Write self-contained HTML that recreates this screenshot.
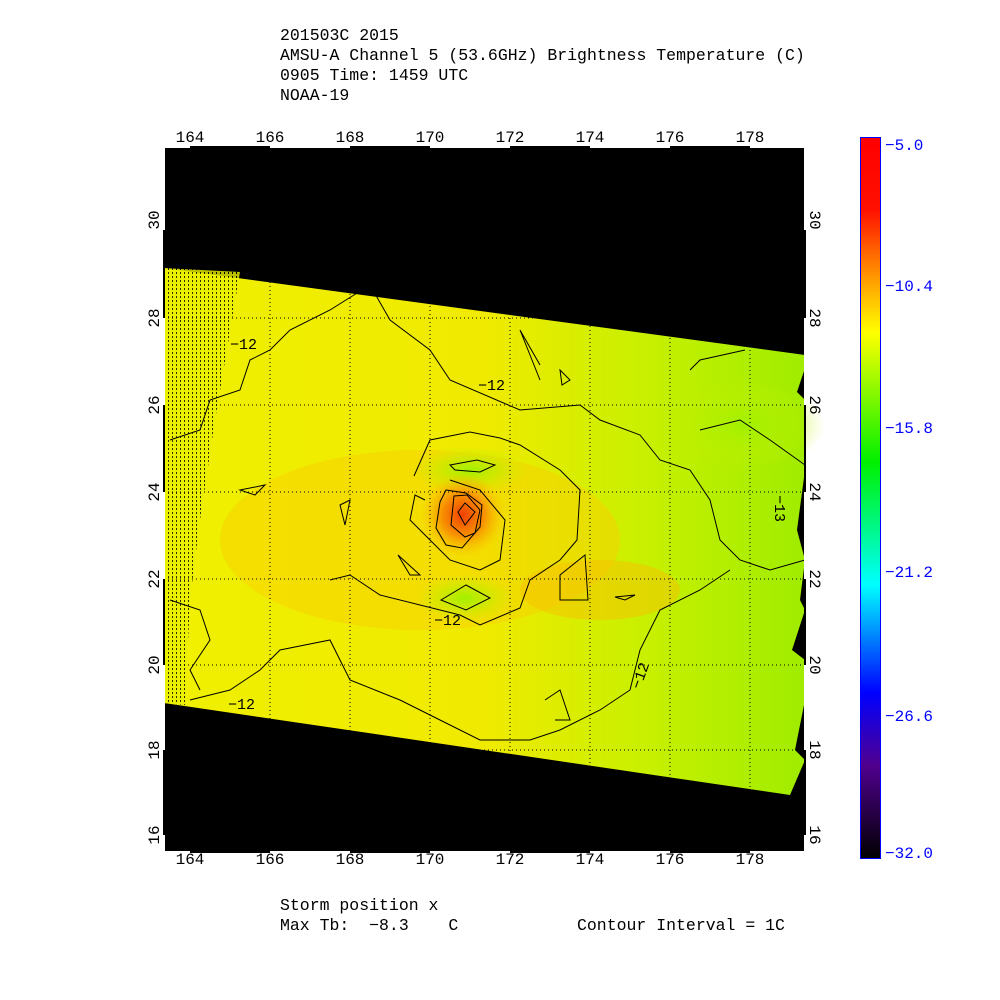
<!DOCTYPE html>
<html><head><meta charset="utf-8"><style>
body{margin:0;background:#fff;width:1000px;height:1000px;overflow:hidden;}
svg{position:absolute;left:0;top:0;font-family:"Liberation Mono","DejaVu Sans Mono",monospace}
</style></head><body>
<svg width="1000" height="1000" xmlns="http://www.w3.org/2000/svg">
<defs>
<linearGradient id="cb" x1="0" y1="0" x2="0" y2="1">
<stop offset="0" stop-color="#ff0000"/><stop offset="0.1" stop-color="#ff1000"/>
<stop offset="0.2" stop-color="#ffa000"/><stop offset="0.27" stop-color="#ffff00"/>
<stop offset="0.45" stop-color="#00f000"/><stop offset="0.62" stop-color="#00ffff"/>
<stop offset="0.77" stop-color="#0000ff"/><stop offset="0.87" stop-color="#500090"/>
<stop offset="1" stop-color="#000000"/></linearGradient>
<linearGradient id="fld" x1="0" y1="0" x2="1" y2="0">
<stop offset="0" stop-color="#f0f000"/><stop offset="0.5" stop-color="#f0ea00"/>
<stop offset="0.75" stop-color="#c8f000"/><stop offset="1" stop-color="#a0ec00"/></linearGradient>
<radialGradient id="hot"><stop offset="0" stop-color="#f04000"/><stop offset="0.5" stop-color="#f89000"/><stop offset="1" stop-color="#f8c000" stop-opacity="0"/></radialGradient>
<radialGradient id="grn"><stop offset="0" stop-color="#a0f000"/><stop offset="1" stop-color="#c8f000" stop-opacity="0"/></radialGradient>
<pattern id="hatch" width="4" height="4" patternUnits="userSpaceOnUse"><rect width="4" height="4" fill="#e8f000"/><rect width="1" height="2" fill="#000"/></pattern>
</defs>
<g font-size="16.5" fill="#000">
<text x="280" y="40">201503C 2015</text>
<text x="280" y="60">AMSU-A Channel 5 (53.6GHz) Brightness Temperature (C)</text>
<text x="280" y="80">0905 Time: 1459 UTC</text>
<text x="280" y="100">NOAA-19</text>
</g>
<rect x="164" y="146" width="641" height="706" fill="#000"/>
<polygon points="164,268 805,355 805,368 797,392 805,400 805,470 797,530 805,560 800,600 805,610 792,650 805,660 805,700 795,750 805,760 790,795 164,703" fill="url(#fld)"/>
<polygon points="164,268 240,272 232,320 215,420 200,520 190,600 185,705 164,703" fill="url(#hatch)" opacity="0.8"/>
<ellipse cx="420" cy="540" rx="200" ry="90" fill="#f8d000" opacity="0.5"/>
<ellipse cx="600" cy="590" rx="80" ry="30" fill="#f8c000" opacity="0.5"/>
<ellipse cx="470" cy="470" rx="60" ry="25" fill="url(#grn)"/>
<ellipse cx="465" cy="598" rx="50" ry="25" fill="url(#grn)"/>
<ellipse cx="745" cy="425" rx="80" ry="45" fill="url(#grn)"/>
<ellipse cx="463" cy="515" rx="42" ry="42" fill="url(#hot)"/>
<g fill="none" stroke="#000" stroke-width="1">
<polygon points="446,490 466,493 482,505 480,527 462,548 446,545 436,528 440,502"/>
<polygon points="454,496 467,495 480,510 475,533 465,537 451,525"/>
<polygon points="465,503 475,512 465,525 458,512"/>
<polygon points="450,465 477,460 495,465 480,472 455,470"/>
<polygon points="441,600 466,585 490,598 466,610"/>
<polyline points="414,476 430,440 470,432 500,438 520,445 560,470 580,490 577,540 560,560 530,580 520,608 480,625 460,615 380,595 350,575 330,580"/>
<polyline points="425,500 415,495 410,520 430,540 450,560 480,570 500,560 505,520 480,490 450,480"/>
<polygon points="560,575 585,555 588,600 560,600"/>
<polygon points="398,555 410,575 420,575"/>
<polygon points="615,597 635,595 625,600"/>
<polygon points="340,505 350,500 345,525"/>
<polygon points="240,490 265,485 255,495"/>
<polygon points="560,370 570,380 562,385"/>
<polyline points="170,440 200,430 210,400 240,390 250,360 270,350 290,330 330,310 370,285 390,320 430,350 450,380 520,410 580,405 600,420 640,435 660,460 690,470 710,500 720,540 740,560 770,570 805,560"/>
<polyline points="190,700 230,690 260,670 280,650 330,640 350,680 400,700 440,720 480,740 530,740 560,730 600,710 630,690 640,650 660,610 700,590 730,570"/>
<polyline points="700,430 740,420 770,440 805,465"/>
<polyline points="545,700 560,690 570,720 555,720"/>
<polyline points="540,380 520,330 540,365"/>
<polyline points="690,370 700,360 745,350"/>
<polyline points="170,600 200,610 210,640 190,670 200,690"/>
</g>
<g fill="#000" font-size="15">
<text x="230" y="349">−12</text><text x="478" y="390">−12</text><text x="434" y="625">−12</text>
<text x="228" y="709">−12</text><text x="640" y="690" transform="rotate(-70 640 690)">−12</text>
<text x="775" y="495" transform="rotate(90 775 495)">−13</text>
</g>
<g stroke="#000" stroke-dasharray="1 3" stroke-width="1">
<line x1="270" y1="146" x2="270" y2="852"/><line x1="350" y1="146" x2="350" y2="852"/>
<line x1="430" y1="146" x2="430" y2="852"/><line x1="510" y1="146" x2="510" y2="852"/>
<line x1="590" y1="146" x2="590" y2="852"/><line x1="670" y1="146" x2="670" y2="852"/>
<line x1="750" y1="146" x2="750" y2="852"/>
<line x1="164" y1="318" x2="805" y2="318"/><line x1="164" y1="405" x2="805" y2="405"/>
<line x1="164" y1="492" x2="805" y2="492"/><line x1="164" y1="579" x2="805" y2="579"/>
<line x1="164" y1="665" x2="805" y2="665"/><line x1="164" y1="750" x2="805" y2="750"/>
</g>
<rect x="164" y="147" width="641" height="705" fill="none" stroke="#fff" stroke-width="2"/>
<g stroke="#000" stroke-width="2">
<line x1="190" y1="147" x2="270" y2="147"/><line x1="350" y1="147" x2="430" y2="147"/>
<line x1="510" y1="147" x2="590" y2="147"/><line x1="670" y1="147" x2="750" y2="147"/>
<line x1="190" y1="852" x2="270" y2="852"/><line x1="350" y1="852" x2="430" y2="852"/>
<line x1="510" y1="852" x2="590" y2="852"/><line x1="670" y1="852" x2="750" y2="852"/>
<line x1="164" y1="230" x2="164" y2="318"/><line x1="164" y1="405" x2="164" y2="492"/><line x1="164" y1="579" x2="164" y2="665"/><line x1="164" y1="750" x2="164" y2="835"/>
<line x1="805" y1="230" x2="805" y2="318"/><line x1="805" y1="405" x2="805" y2="492"/><line x1="805" y1="579" x2="805" y2="665"/><line x1="805" y1="750" x2="805" y2="835"/>
</g>
<g font-size="16" fill="#000" text-anchor="middle">
<text x="190" y="142">164</text><text x="270" y="142">166</text><text x="350" y="142">168</text><text x="430" y="142">170</text><text x="510" y="142">172</text><text x="590" y="142">174</text><text x="670" y="142">176</text><text x="750" y="142">178</text>
<text x="190" y="864">164</text><text x="270" y="864">166</text><text x="350" y="864">168</text><text x="430" y="864">170</text><text x="510" y="864">172</text><text x="590" y="864">174</text><text x="670" y="864">176</text><text x="750" y="864">178</text>
</g>
<g font-size="16" fill="#000" text-anchor="middle">
<text transform="translate(159,220) rotate(-90)">30</text><text transform="translate(159,318) rotate(-90)">28</text>
<text transform="translate(159,405) rotate(-90)">26</text><text transform="translate(159,492) rotate(-90)">24</text>
<text transform="translate(159,579) rotate(-90)">22</text><text transform="translate(159,665) rotate(-90)">20</text>
<text transform="translate(159,750) rotate(-90)">18</text><text transform="translate(159,835) rotate(-90)">16</text>
<text transform="translate(810,220) rotate(90)">30</text><text transform="translate(810,318) rotate(90)">28</text>
<text transform="translate(810,405) rotate(90)">26</text><text transform="translate(810,492) rotate(90)">24</text>
<text transform="translate(810,579) rotate(90)">22</text><text transform="translate(810,665) rotate(90)">20</text>
<text transform="translate(810,750) rotate(90)">18</text><text transform="translate(810,835) rotate(90)">16</text>
</g>
<rect x="860.5" y="137.5" width="20" height="721" fill="url(#cb)" stroke="#00f"/>
<g fill="#00f" font-size="16">
<text x="885" y="150">−5.0</text><text x="885" y="291">−10.4</text><text x="885" y="433">−15.8</text>
<text x="885" y="577">−21.2</text><text x="885" y="721">−26.6</text><text x="885" y="858">−32.0</text>
</g>
<g font-size="16.5" fill="#000" style="white-space:pre">
<text x="280" y="910">Storm position x</text>
<text x="280" y="930" xml:space="preserve">Max Tb:  −8.3    C</text>
<text x="577" y="930">Contour Interval = 1C</text>
</g>
</svg>
</body></html>
